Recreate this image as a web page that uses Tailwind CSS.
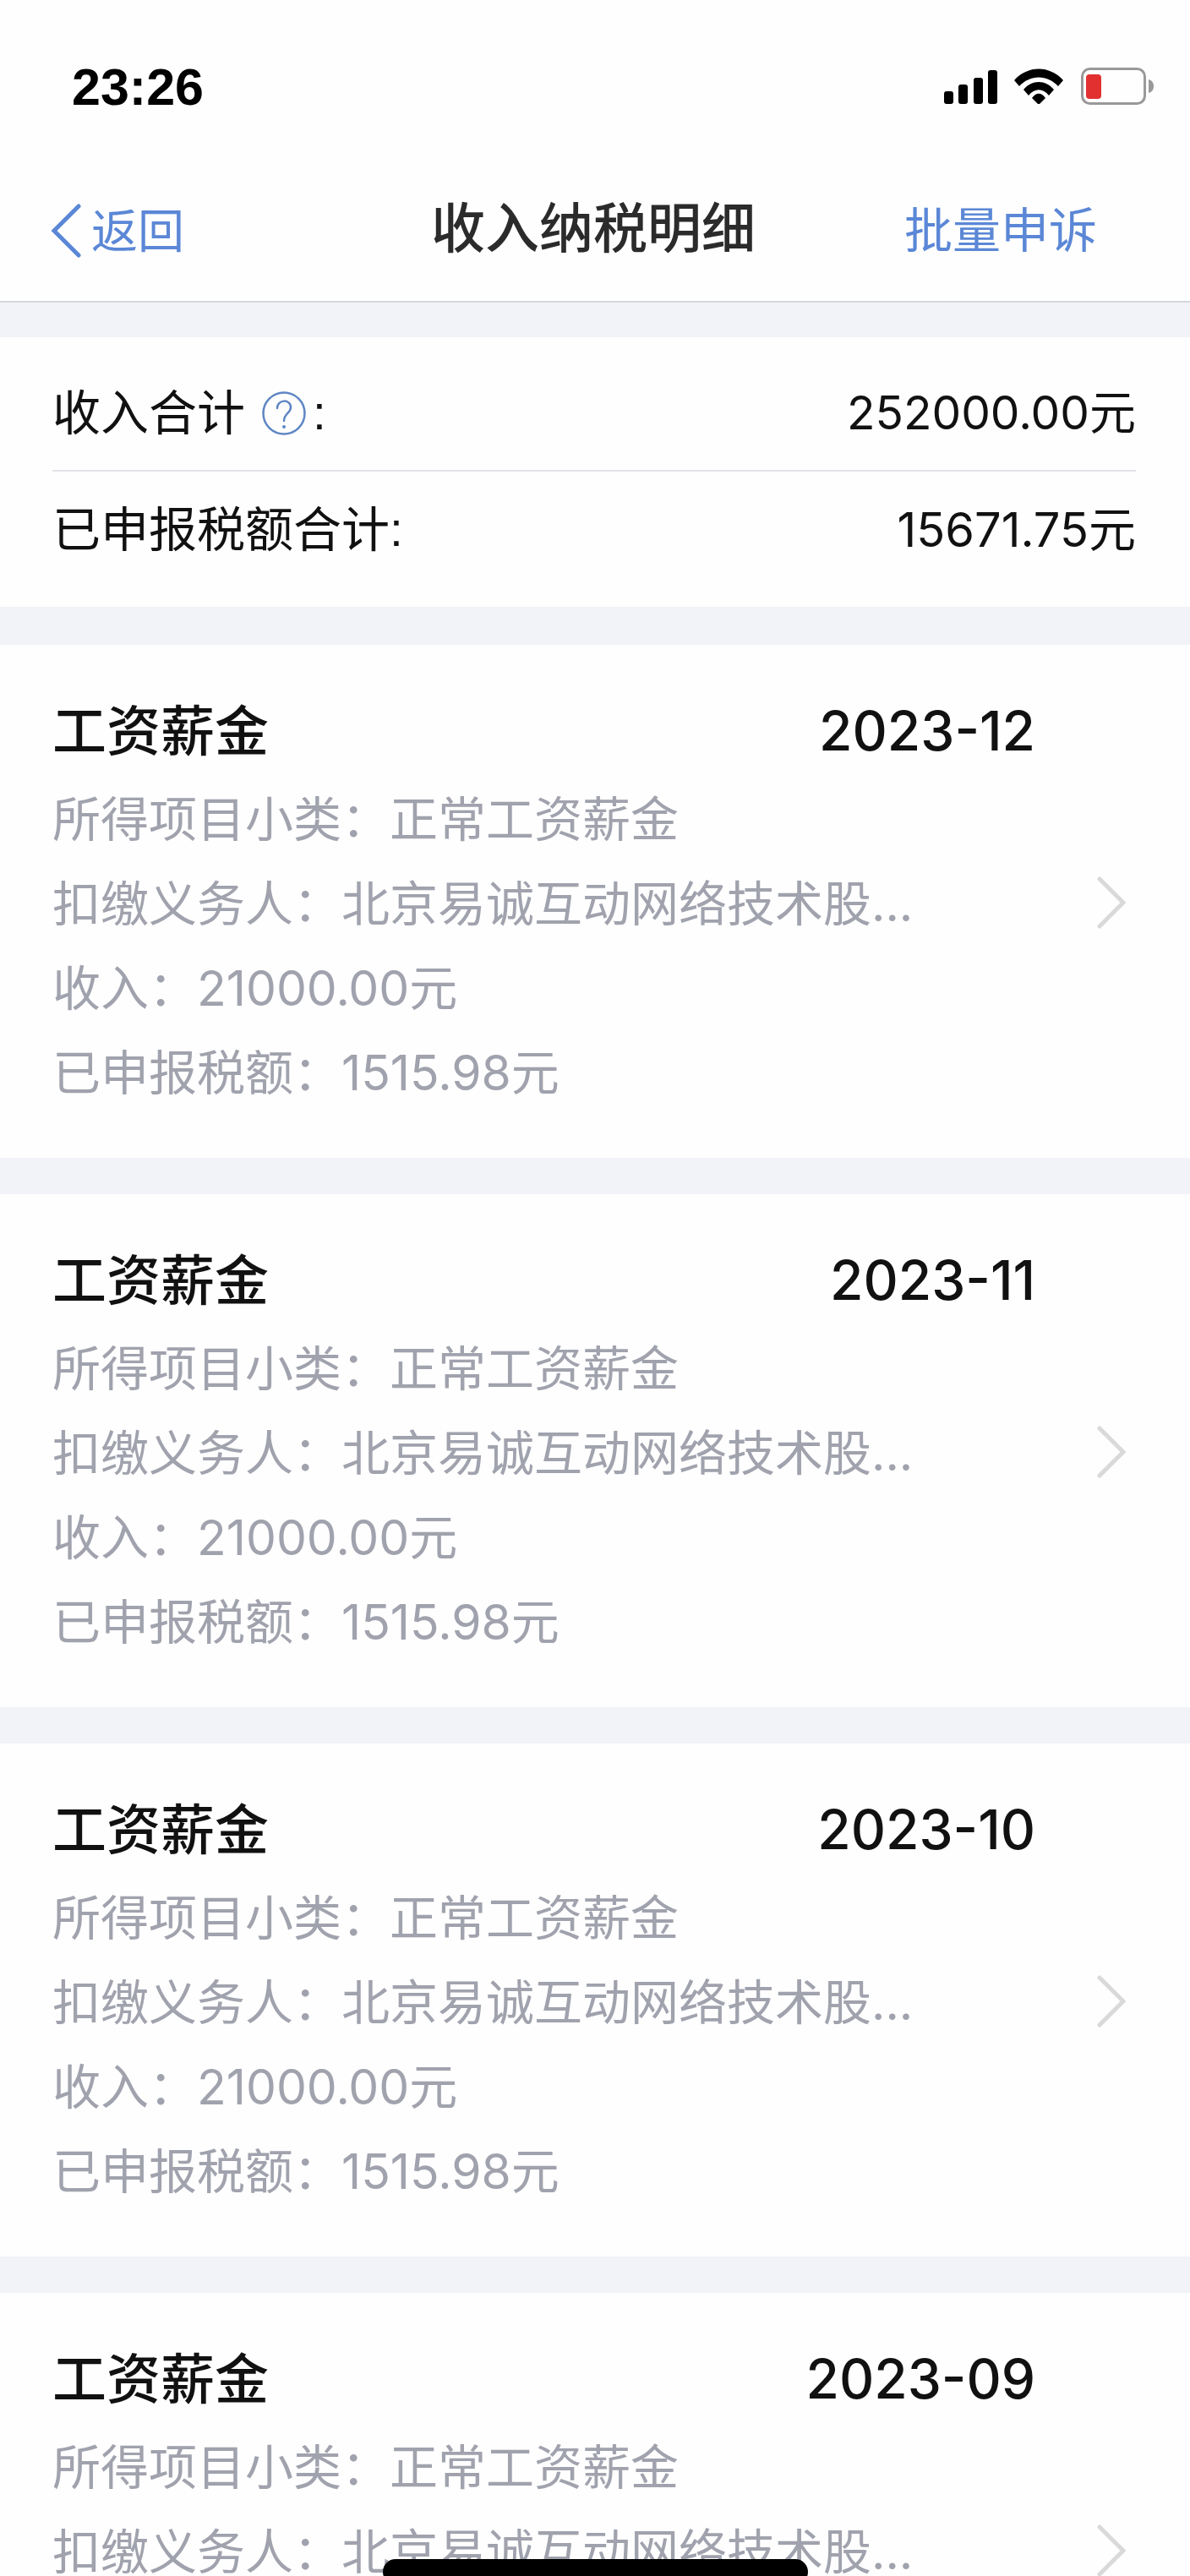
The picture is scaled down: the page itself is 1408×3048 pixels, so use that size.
<!DOCTYPE html>
<html lang="zh-CN">
<head>
  <meta charset="UTF-8">
  <meta name="viewport" content="width=device-width, initial-scale=1.0">
  <title>收入纳税明细</title>
  <script src="https://cdn.jsdelivr.net/npm/@tailwindcss/browser@4"></script>
</head>
<body class="bg-[#f2f3f8] font-['Inter','Noto_Sans_CJK_SC',sans-serif]">
<div class="relative h-[3048px] overflow-hidden">
  <!-- status bar -->
  <div class="bg-[#fefefe] h-[206px] flex justify-between items-start pt-[80px] pl-[85px] pr-[43px]">
    <span class="font-['Liberation_Sans',sans-serif] font-bold text-[61px] leading-[46px] text-black">23:26</span>
    <div class="flex items-center">
      <svg class="w-[64px] h-[42px]" viewBox="0 0 64 42" fill="#000">
        <rect x="0" y="27" width="11" height="15" rx="3"/>
        <rect x="17" y="19" width="11" height="23" rx="3"/>
        <rect x="35" y="11" width="11" height="31" rx="3"/>
        <rect x="52" y="2" width="11" height="40" rx="3"/>
      </svg>
      <svg class="w-[58px] h-[42px] ml-[19px]" viewBox="0 0 58 42" fill="#000">
        <path d="M0 14 C16 -4 42 -4 58 14 L52 21 C39 7 19 7 6 21 Z"/>
        <path d="M11 25 C21 13 37 13 47 25 L41 32 C34 23 24 23 17 32 Z"/>
        <path d="M21 35 C26 28 32 28 37 35 L29 43 Z"/>
      </svg>
      <svg class="w-[86px] h-[44px] ml-[21px]" viewBox="0 0 86 44">
        <rect x="1.5" y="1.5" width="74" height="41" rx="9" fill="none" stroke="#999" stroke-width="3"/>
        <rect x="6" y="8" width="18" height="29" rx="4" fill="#e23030"/>
        <path d="M80 14 C84 15 86 18 86 22 C86 26 84 29 80 30 Z" fill="#999"/>
      </svg>
    </div>
  </div>

  <!-- nav -->
  <div class="relative bg-[#fefefe] h-[152px] border-b-2 border-[#d6d7de] flex items-center justify-between pb-[16px] pl-[60px] pr-[110px]">
    <div class="flex items-center text-[#5b87d6] text-[55px]">
      <svg class="w-[36px] h-[64px]" viewBox="0 0 36 64" fill="none" stroke="#5b87d6" stroke-width="5" stroke-linecap="round">
        <path d="M33 3 L4 32 L33 61"/>
      </svg>
      <span class="ml-[12px] leading-[64px]">返回</span>
    </div>
    <span class="absolute left-[510px] top-[24px] text-[64px] leading-[80px] font-medium text-[#2b2b2b]">收入纳税明细</span>
    <span class="text-[#5b87d6] text-[57px] leading-[64px]">批量申诉</span>
  </div>

  <!-- summary -->
  <div class="bg-[#fefefe] mt-[41px] h-[319px] pl-[62px] pr-[64px] text-[57px] text-[#111]">
    <div class="h-[159px] border-b-2 border-[#e3e4e9] flex items-center justify-between pt-[22px]">
      <div class="flex items-center">
        <span>收入合计</span>
        <svg class="w-[52px] h-[52px] ml-[20px]" viewBox="0 0 52 52" fill="none">
          <circle cx="26" cy="26" r="24.5" stroke="#5f86c4" stroke-width="2.5"/>
          <path d="M18 20 C18 9 34 9 34 19 C34 26 26 26 26 35" stroke="#5f86c4" stroke-width="2.5" stroke-linecap="round"/>
          <circle cx="26" cy="42" r="2" fill="#5f86c4"/>
        </svg>
        <span class="ml-[8px] font-['Liberation_Sans',sans-serif]">:</span>
      </div>
      <span class="text-[55px]">252000.00元</span>
    </div>
    <div class="h-[138px] flex items-center justify-between">
      <div class="flex items-center">
        <span>已申报税额合计</span>
        <span class="font-['Liberation_Sans',sans-serif]">:</span>
      </div>
      <span class="text-[56px]">15671.75元</span>
    </div>
  </div>

  <!-- cards -->
  <div class="mt-[45px] flex flex-col gap-[43px]">
    <div class="bg-[#fefefe] h-[607px] pl-[62px] pr-[76px] pt-[62px] flex justify-between items-start">
      <div class="w-[1163px]">
        <div class="flex justify-between h-[80px] items-center text-[#111]">
          <span class="text-[64px] font-medium">工资薪金</span>
          <span class="text-[64px] font-medium">2023-12</span>
        </div>
        <div class="mt-[12px] grid auto-rows-[100px] items-center text-[57px] leading-[100px] text-[#a0a2ad]">
          <div>所得项目小类<span class="font-['Noto_Sans_CJK_TC']">&#xFF1A;</span>正常工资薪金</div>
          <div>扣缴义务人<span class="font-['Noto_Sans_CJK_TC']">&#xFF1A;</span>北京易诚互动网络技术股...</div>
          <div>收入<span class="font-['Noto_Sans_CJK_TC']">&#xFF1A;</span>21000.00元</div>
          <div>已申报税额<span class="font-['Noto_Sans_CJK_TC']">&#xFF1A;</span>1515.98元</div>
        </div>
      </div>
      <svg class="w-[34px] h-[62px] mt-[212px]" viewBox="0 0 34 62" fill="none" stroke="#d9d9d9" stroke-width="5" stroke-linecap="round"><path d="M3 3 L31 31 L3 59"/></svg>
    </div>

    <div class="bg-[#fefefe] h-[607px] pl-[62px] pr-[76px] pt-[62px] flex justify-between items-start">
      <div class="w-[1163px]">
        <div class="flex justify-between h-[80px] items-center text-[#111]">
          <span class="text-[64px] font-medium">工资薪金</span>
          <span class="text-[64px] font-medium">2023-11</span>
        </div>
        <div class="mt-[12px] grid auto-rows-[100px] items-center text-[57px] leading-[100px] text-[#a0a2ad]">
          <div>所得项目小类<span class="font-['Noto_Sans_CJK_TC']">&#xFF1A;</span>正常工资薪金</div>
          <div>扣缴义务人<span class="font-['Noto_Sans_CJK_TC']">&#xFF1A;</span>北京易诚互动网络技术股...</div>
          <div>收入<span class="font-['Noto_Sans_CJK_TC']">&#xFF1A;</span>21000.00元</div>
          <div>已申报税额<span class="font-['Noto_Sans_CJK_TC']">&#xFF1A;</span>1515.98元</div>
        </div>
      </div>
      <svg class="w-[34px] h-[62px] mt-[212px]" viewBox="0 0 34 62" fill="none" stroke="#d9d9d9" stroke-width="5" stroke-linecap="round"><path d="M3 3 L31 31 L3 59"/></svg>
    </div>

    <div class="bg-[#fefefe] h-[607px] pl-[62px] pr-[76px] pt-[62px] flex justify-between items-start">
      <div class="w-[1163px]">
        <div class="flex justify-between h-[80px] items-center text-[#111]">
          <span class="text-[64px] font-medium">工资薪金</span>
          <span class="text-[64px] font-medium">2023-10</span>
        </div>
        <div class="mt-[12px] grid auto-rows-[100px] items-center text-[57px] leading-[100px] text-[#a0a2ad]">
          <div>所得项目小类<span class="font-['Noto_Sans_CJK_TC']">&#xFF1A;</span>正常工资薪金</div>
          <div>扣缴义务人<span class="font-['Noto_Sans_CJK_TC']">&#xFF1A;</span>北京易诚互动网络技术股...</div>
          <div>收入<span class="font-['Noto_Sans_CJK_TC']">&#xFF1A;</span>21000.00元</div>
          <div>已申报税额<span class="font-['Noto_Sans_CJK_TC']">&#xFF1A;</span>1515.98元</div>
        </div>
      </div>
      <svg class="w-[34px] h-[62px] mt-[212px]" viewBox="0 0 34 62" fill="none" stroke="#d9d9d9" stroke-width="5" stroke-linecap="round"><path d="M3 3 L31 31 L3 59"/></svg>
    </div>

    <div class="bg-[#fefefe] h-[607px] pl-[62px] pr-[76px] pt-[62px] flex justify-between items-start">
      <div class="w-[1163px]">
        <div class="flex justify-between h-[80px] items-center text-[#111]">
          <span class="text-[64px] font-medium">工资薪金</span>
          <span class="text-[64px] font-medium">2023-09</span>
        </div>
        <div class="mt-[12px] grid auto-rows-[100px] items-center text-[57px] leading-[100px] text-[#a0a2ad]">
          <div>所得项目小类<span class="font-['Noto_Sans_CJK_TC']">&#xFF1A;</span>正常工资薪金</div>
          <div>扣缴义务人<span class="font-['Noto_Sans_CJK_TC']">&#xFF1A;</span>北京易诚互动网络技术股...</div>
          <div>收入<span class="font-['Noto_Sans_CJK_TC']">&#xFF1A;</span>21000.00元</div>
          <div>已申报税额<span class="font-['Noto_Sans_CJK_TC']">&#xFF1A;</span>1515.98元</div>
        </div>
      </div>
      <svg class="w-[34px] h-[62px] mt-[212px]" viewBox="0 0 34 62" fill="none" stroke="#d9d9d9" stroke-width="5" stroke-linecap="round"><path d="M3 3 L31 31 L3 59"/></svg>
    </div>
  </div>

  <!-- home indicator -->
  <div class="absolute left-[453px] top-[3028px] w-[503px] h-[30px] rounded-full bg-black"></div>
</div>
</body>
</html>
